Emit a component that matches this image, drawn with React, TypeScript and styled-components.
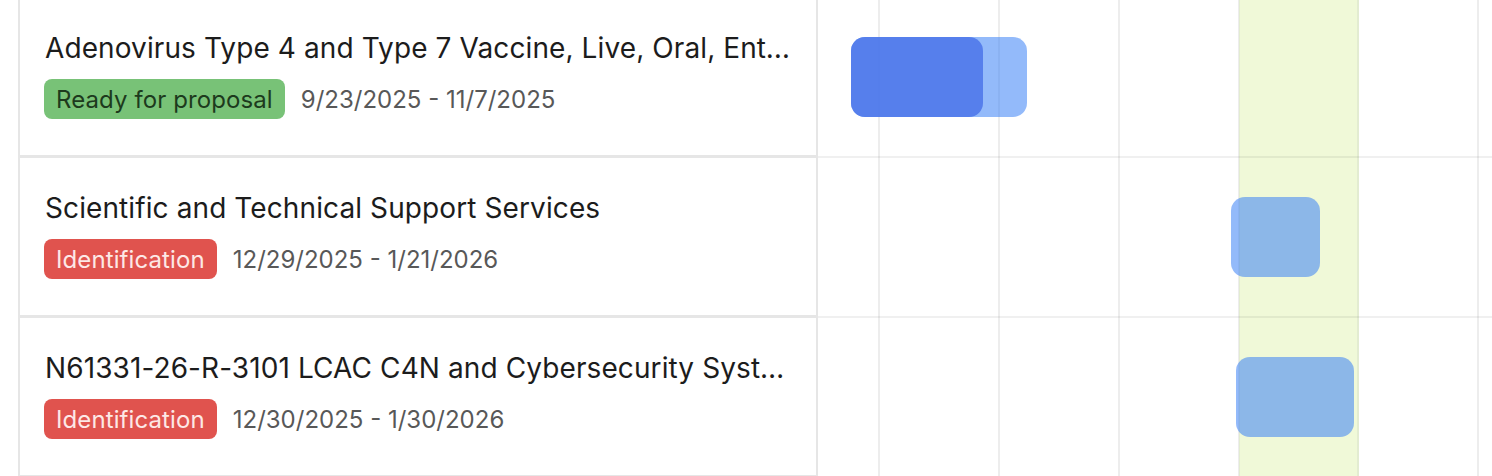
import React from 'react';
import styled, { createGlobalStyle } from 'styled-components';

const GlobalStyle = createGlobalStyle`
  html, body {
    margin: 0;
    padding: 0;
    background: #ffffff;
    overflow: hidden;
  }
  body {
    font-family: Inter, "Noto Sans", sans-serif;
  }
`;

type Stage = 'proposal' | 'identification';

interface IBar {
  left: number;
  width: number;
  tone: 'dark' | 'light';
}

interface IOpportunity {
  id: number;
  title: string;
  stage: Stage;
  stageLabel: string;
  range: string;
  bars: IBar[];
}

const opportunities: IOpportunity[] = [
  {
    id: 1,
    title: 'Adenovirus Type 4 and Type 7 Vaccine, Live, Oral, Enteric Coated Tablets',
    stage: 'proposal',
    stageLabel: 'Ready for proposal',
    range: '9/23/2025 - 11/7/2025',
    bars: [
      { left: 33, width: 176, tone: 'light' },
      { left: 33, width: 132, tone: 'dark' },
    ],
  },
  {
    id: 2,
    title: 'Scientific and Technical Support Services',
    stage: 'identification',
    stageLabel: 'Identification',
    range: '12/29/2025 - 1/21/2026',
    bars: [{ left: 413, width: 89, tone: 'light' }],
  },
  {
    id: 3,
    title: 'N61331-26-R-3101 LCAC C4N and Cybersecurity Systems Support',
    stage: 'identification',
    stageLabel: 'Identification',
    range: '12/30/2025 - 1/30/2026',
    bars: [{ left: 418, width: 118, tone: 'light' }],
  },
];

// first column is cut off by the scroll position
const columns = [
  { width: 62, today: false },
  { width: 120, today: false },
  { width: 120, today: false },
  { width: 120, today: false },
  { width: 120, today: true },
  { width: 120, today: false },
  { width: 120, today: false },
];

const App = () => (
  <>
    <GlobalStyle />
    <Page>
      <ListPanel>
        {opportunities.map((item) => (
          <ListRow key={item.id}>
            <Title>{item.title}</Title>
            <Meta>
              <Badge $stage={item.stage}>{item.stageLabel}</Badge>
              <DateRange>{item.range}</DateRange>
            </Meta>
          </ListRow>
        ))}
      </ListPanel>

      <Timeline>
        <Columns>
          {columns.map((col, i) => (
            <Column key={i} $today={col.today} style={{ width: col.width }} />
          ))}
        </Columns>
        <Lanes>
          {opportunities.map((item) => (
            <Lane key={item.id}>
              {item.bars.map((bar, i) => (
                <Bar
                  key={i}
                  $tone={bar.tone}
                  style={{ left: bar.left, width: bar.width }}
                />
              ))}
            </Lane>
          ))}
        </Lanes>
      </Timeline>
    </Page>
  </>
);

const Page = styled.div`
  display: flex;
  height: 476px;
  overflow: hidden;
  padding-left: 18px;
  background: #fff;
`;

const ListPanel = styled.div`
  width: 796px;
  flex-shrink: 0;
  margin-top: -2px;
  border-left: 2px solid #e6e6e6;
  border-right: 2px solid #e6e6e6;
  display: flex;
  flex-direction: column;
`;

const ListRow = styled.div`
  height: 160px;
  flex-shrink: 0;
  box-sizing: border-box;
  padding: 30px 24px 0 24px;
  border-bottom: 3px solid #e6e6e6;
  display: flex;
  flex-direction: column;
  gap: 11px;
  min-width: 0;
`;

const Title = styled.div`
  font-size: 28px;
  line-height: 40px;
  letter-spacing: 0.1px;
  color: #1c1c1c;
  padding-left: 1px;
  white-space: nowrap;
  overflow: hidden;
  text-overflow: ellipsis;
`;

const Meta = styled.div`
  display: flex;
  align-items: center;
  gap: 16px;
`;

const Badge = styled.span<{ $stage: Stage }>`
  display: inline-flex;
  align-items: center;
  height: 40px;
  padding: 0 12px;
  border-radius: 8px;
  font-size: 24px;
  letter-spacing: 0.1px;
  background: ${(p) => (p.$stage === 'proposal' ? '#78c277' : '#e0534e')};
  color: ${(p) => (p.$stage === 'proposal' ? '#1d3a1d' : '#fde8e6')};
`;

const DateRange = styled.span`
  font-size: 24px;
  color: #585858;
`;

const Timeline = styled.div`
  position: relative;
  flex: 1;
  overflow: hidden;
`;

const Columns = styled.div`
  position: absolute;
  inset: 0;
  display: flex;
`;

const Column = styled.div<{ $today: boolean }>`
  flex-shrink: 0;
  box-sizing: border-box;
  height: 100%;
  background: ${(p) => (p.$today ? '#f0f9d8' : 'transparent')};
  border-right: 2px solid ${(p) => (p.$today ? '#e3ecd1' : '#ededed')};
  border-left: ${(p) => (p.$today ? '1px solid #e3ecd1' : 'none')};
  margin-left: ${(p) => (p.$today ? '-1px' : '0')};
`;

const Lanes = styled.div`
  position: relative;
  margin-top: -2px;
  display: flex;
  flex-direction: column;
`;

const Lane = styled.div`
  position: relative;
  height: 160px;
  box-sizing: border-box;
  border-bottom: 2px solid rgba(0, 0, 0, 0.06);
  flex-shrink: 0;
`;

const Bar = styled.div<{ $tone: 'dark' | 'light' }>`
  position: absolute;
  top: 39px;
  height: 80px;
  border-radius: 14px;
  background: ${(p) =>
    p.$tone === 'dark' ? 'rgba(80, 122, 234, 0.92)' : 'rgba(59, 130, 246, 0.55)'};
`;

export default App;
